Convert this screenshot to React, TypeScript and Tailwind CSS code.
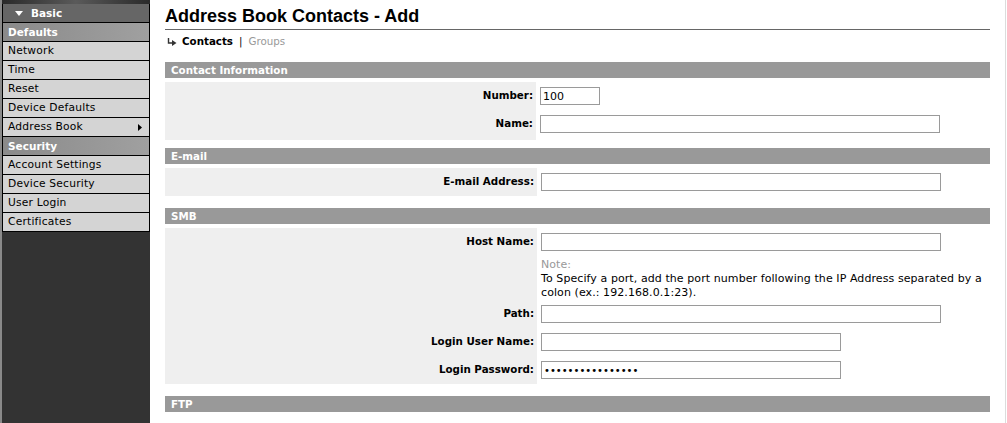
import React from "react";

const menu: { label: string; kind: "head" | "item"; arrow?: boolean }[] = [
  { label: "Defaults", kind: "head" },
  { label: "Network", kind: "item" },
  { label: "Time", kind: "item" },
  { label: "Reset", kind: "item" },
  { label: "Device Defaults", kind: "item" },
  { label: "Address Book", kind: "item", arrow: true },
  { label: "Security", kind: "head" },
  { label: "Account Settings", kind: "item" },
  { label: "Device Security", kind: "item" },
  { label: "User Login", kind: "item" },
  { label: "Certificates", kind: "item" },
];

function Sidebar() {
  return (
    <aside className="w-[150px] shrink-0 bg-[#333333] border-l-2 border-[#8a8a8a] flex flex-col">
      <div className="h-[4px] bg-linear-to-r from-[#2a2a2a] via-[#5a5a5a] to-[#2a2a2a]" />
      <div className="border-x border-black">
        <div className="h-[19px] border-b border-black bg-[#666666] flex items-center pt-[1px] pl-[12px] text-white font-bold text-[10.5px]">
          <svg width="8" height="5" viewBox="0 0 8 5" className="mr-[8px]">
            <polygon points="0,0 8,0 4,5" fill="#fff" />
          </svg>
          Basic
        </div>
        {menu.map((m) =>
          m.kind === "head" ? (
            <div
              key={m.label}
              className="h-[19px] border-b border-black bg-linear-to-r from-[#8a8a8a] to-[#a0a0a0] flex items-center pt-[1px] pl-[5px] text-white font-bold text-[10.5px]"
            >
              {m.label}
            </div>
          ) : (
            <div
              key={m.label}
              className="h-[19px] border-b border-black bg-[#d4d4d4] flex items-center justify-between pt-[1px] pl-[5px] pr-[7px] text-black text-[10.7px] tracking-[0.2px]"
            >
              <span>{m.label}</span>
              {m.arrow && (
                <svg width="4" height="7" viewBox="0 0 4 7" className="-mt-[1px]">
                  <polygon points="0,0 4,3.5 0,7" fill="#000" />
                </svg>
              )}
            </div>
          )
        )}
      </div>
    </aside>
  );
}

function Bar({ title, className }: { title: string; className?: string }) {
  return (
    <div className={`h-[16px] bg-[#999999] text-white font-bold text-[10.3px] leading-[16px] pl-[6px] ${className ?? ""}`}>
      {title}
    </div>
  );
}

function Row({
  label,
  value,
  width,
  labelWidth = "w-[372px]",
  small,
}: {
  label: string;
  value?: string;
  width: string;
  labelWidth?: string;
  small?: boolean;
}) {
  return (
    <div className="flex h-[28px]">
      <div className={`${labelWidth} shrink-0 bg-[#efefef] flex items-center justify-end pr-[3px] font-bold text-[10.3px] text-black`}>
        {label}
      </div>
      <div className="flex-1 pl-[4px] flex items-center">
        <input
          readOnly
          value={value ?? ""}
          className={`${width} h-[18px] border border-[#9a9a9a] bg-white px-[2px] ${small ? "text-[10px]" : "text-[11px]"} text-black outline-none font-['DejaVu_Sans',sans-serif]`}
        />
      </div>
    </div>
  );
}

function Gap({ labelWidth = "w-[372px]", h }: { labelWidth?: string; h: string }) {
  return (
    <div className={`flex ${h}`}>
      <div className={`${labelWidth} bg-[#efefef]`} />
    </div>
  );
}

export default function App() {
  return (
    <div className="w-[1007px] h-[423px] overflow-hidden flex bg-white font-['DejaVu_Sans',sans-serif]">
      <Sidebar />
      <main className="flex-1 pl-[15px] pr-[15px]">
        <h1 className="pt-[5px] pb-[2px] border-b border-[#666666] text-[18px] leading-[22px] font-bold text-black font-['Liberation_Sans',Arial,sans-serif]">
          Address Book Contacts - Add
        </h1>
        <div className="mt-[5px] h-[13px] flex items-center text-[10.3px] leading-[13px] pl-[2px]">
          <svg width="10" height="8" viewBox="0 0 10 8" className="mr-[5px]">
            <path d="M1.5 0 V5 H6" stroke="#333" strokeWidth="1.4" fill="none" />
            <polygon points="5,2 9.5,5 5,8" fill="#333" />
          </svg>
          <span className="font-bold text-black">Contacts</span>
          <span className="mx-[6px] text-black">|</span>
          <span className="text-[#999999]">Groups</span>
        </div>

        <Bar title="Contact Information" className="mt-[14px]" />
        <div className="mt-[4px]">
          <Row label="Number:" value="100" width="w-[60px]" labelWidth="w-[371px]" />
          <Row label="Name:" width="w-[400px]" labelWidth="w-[371px]" />
          <Gap labelWidth="w-[371px]" h="h-[2px]" />
        </div>

        <Bar title="E-mail" className="mt-[8px]" />
        <div className="mt-[4px]">
          <Row label="E-mail Address:" width="w-[400px]" />
        </div>

        <Bar title="SMB" className="mt-[12px]" />
        <div className="mt-[4px]">
          <Row label="Host Name:" width="w-[400px]" />
          <div className="flex">
            <div className="w-[372px] shrink-0 bg-[#efefef]" />
            <div className="flex-1 pl-[4px] pt-[2px] text-[11px] leading-[14px] tracking-[0.08px] text-black whitespace-nowrap">
              <div className="text-[#999999]">Note:</div>
              <div>To Specify a port, add the port number following the IP Address separated by a</div>
              <div>colon (ex.: 192.168.0.1:23).</div>
            </div>
          </div>
          <Row label="Path:" width="w-[400px]" />
          <Row label="Login User Name:" width="w-[300px]" />
          <Row label="Login Password:" value={"\u2022".repeat(16)} width="w-[300px]" small />
        </div>

        <Bar title="FTP" className="mt-[12px]" />
      </main>
      <div className="w-px bg-[#dcdcdc]" />
      <div className="w-px" />
    </div>
  );
}
